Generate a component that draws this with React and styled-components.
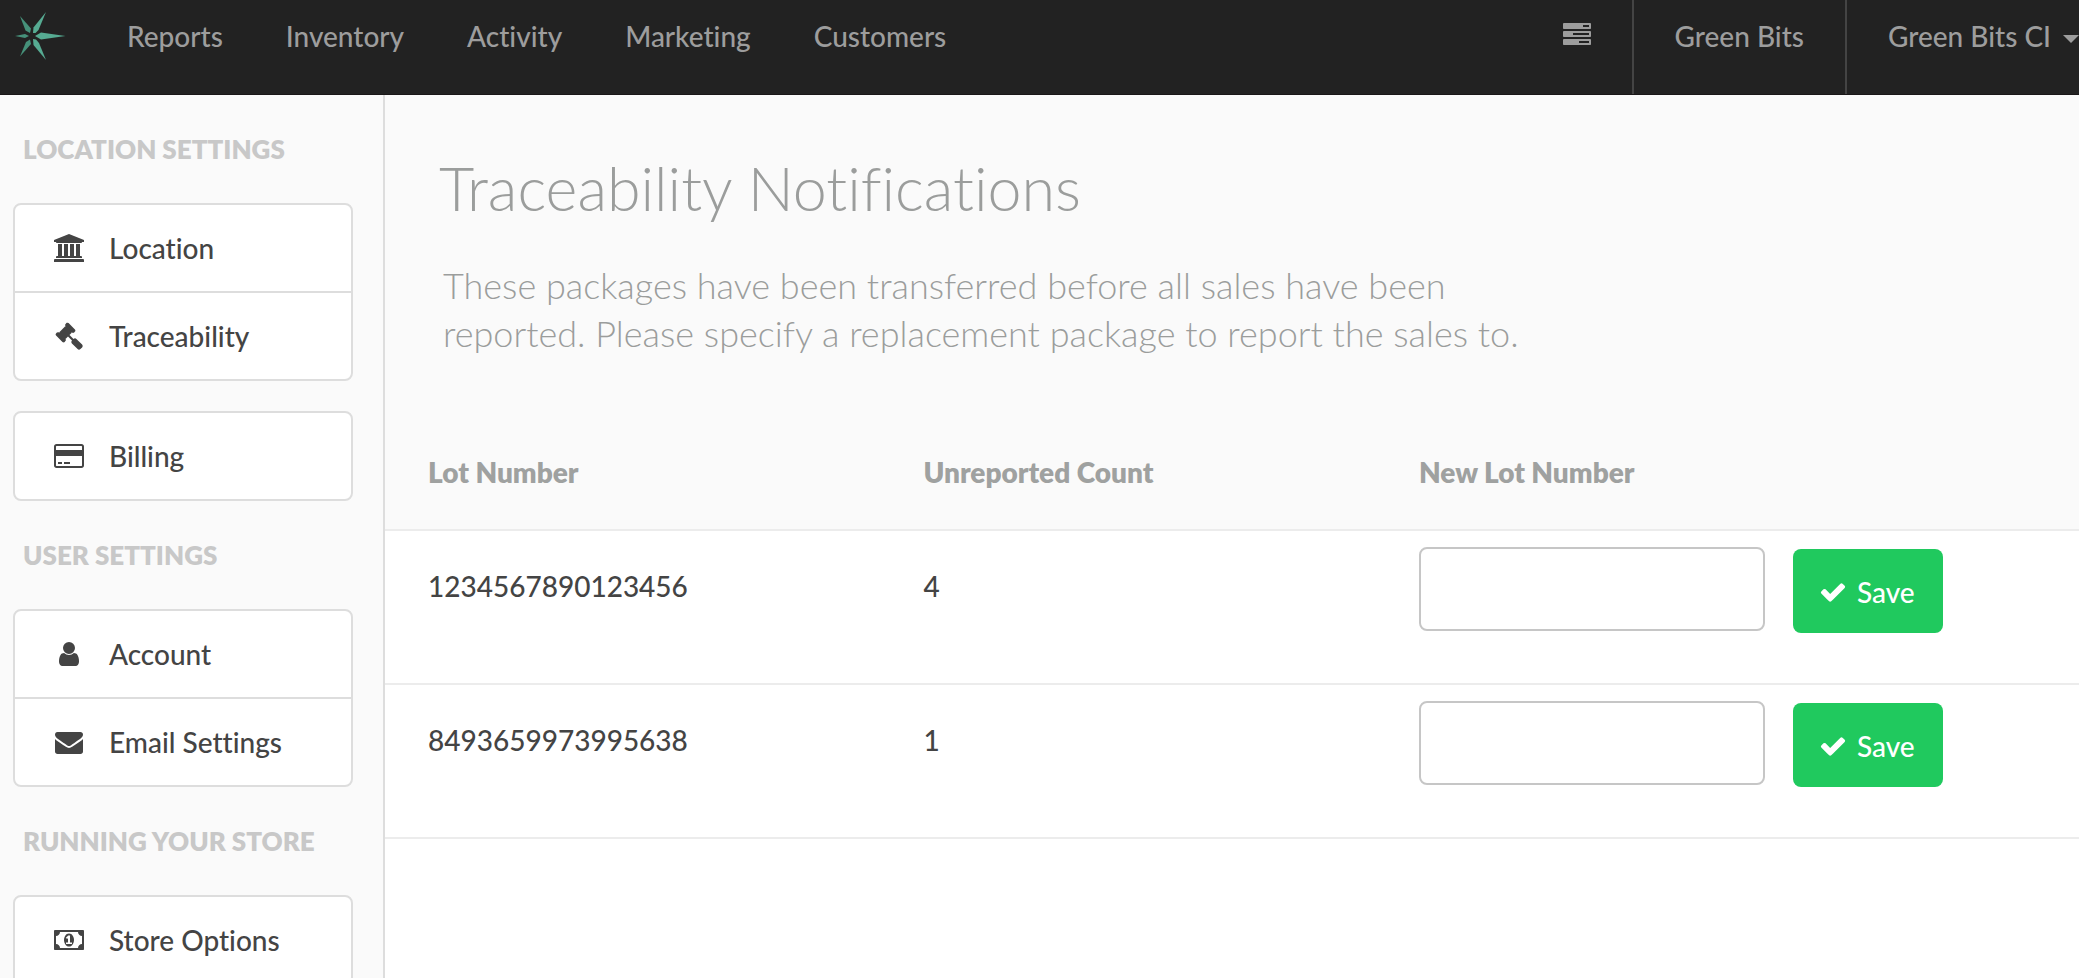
import React from "react";
import styled, { createGlobalStyle } from "styled-components";

const GlobalStyle = createGlobalStyle`
  *, *::before, *::after { box-sizing: border-box; }
  body {
    margin: 0;
    background: #fff;
    color: #444;
    font-family: Lato, "Liberation Sans", sans-serif;
    font-size: 28px;
    font-weight: 500;
    font-variant-ligatures: none;
    line-height: 34px;
    -webkit-font-smoothing: antialiased;
  }
`;

const Page = styled.div`
  display: flex;
  flex-direction: column;
  height: 100vh;
  overflow: hidden;
`;

const TopBar = styled.header`
  display: flex;
  flex: none;
  justify-content: space-between;
  height: 95px;
  padding-left: 12px;
  background: #222;
  border-bottom: 1px solid #1a1718;
  white-space: nowrap;
`;

const BarGroup = styled.nav`
  display: flex;
  gap: ${(p) => p.$gap || "0"};
`;

const Brand = styled.a`
  display: block;
  padding: 10px 0;
  margin-right: 26px;
  line-height: 0;
`;

const BarLink = styled.a`
  display: block;
  padding: 19px 30px 0;
  color: #9d9d9d;
  text-decoration: none;
`;

const BarIconLink = styled(BarLink)`
  padding: 21px 41px 0;
  line-height: 0;
`;

const AccountLink = styled(BarLink)`
  padding: 19px 41px 0;
  border-left: 2px solid #444;
`;

const AccountMenu = styled.button`
  display: flex;
  align-items: flex-start;
  gap: 12px;
  padding: 19px 0 0 41px;
  border: 0;
  border-left: 2px solid #444;
  background: none;
  color: #9d9d9d;
  font: inherit;
`;

const Caret = styled.span`
  margin-top: 16px;
  border: 8px solid transparent;
  border-top-color: currentColor;
  border-bottom: 0;
`;

const Body = styled.div`
  display: flex;
  flex: 1;
  min-height: 0;
`;

const Sidebar = styled.aside`
  flex: none;
  width: 385px;
  padding: 0 30px 0 13px;
  border-right: 2px solid #ddd;
  background: #fafafa;
  overflow: hidden;
`;

const SectionTitle = styled.h2`
  margin: 0;
  padding: 38px 10px;
  color: #c8c8c8;
  font-size: 26px;
  font-weight: 800;
  line-height: 32px;
  text-transform: uppercase;
  white-space: nowrap;
`;

const Menu = styled.ul`
  margin: 0;
  padding: 0;
  list-style: none;
  border: 2px solid #ddd;
  border-radius: 8px;
  background: #fff;

  & + & { margin-top: 30px; }
`;

const MenuItem = styled.li`
  & + & { border-top: 2px solid #ddd; }
`;

const MenuLink = styled.a`
  display: flex;
  align-items: center;
  gap: 22px;
  height: 86px;
  padding: 0 36px;
  color: #444;
  text-decoration: none;
  white-space: nowrap;
`;

const IconSlot = styled.span`
  display: flex;
  justify-content: center;
  width: 36px;
`;

const Main = styled.main`
  flex: 1;
  min-width: 0;
  overflow: hidden;
`;

const Intro = styled.section`
  padding: 57px 54px 58px;
  background: #fafafa;
  color: #9b9d9c;
`;

const Title = styled.h1`
  margin: 0 0 37px;
  font-size: 61px;
  font-weight: 300;
  line-height: 72px;
`;

const Lead = styled.p`
  max-width: 1100px;
  margin: 0;
  padding-left: 4px;
  font-size: 36px;
  font-weight: 300;
  line-height: 48px;
`;

const Table = styled.table`
  width: 100%;
  border-collapse: separate;
  border-spacing: 0;
  table-layout: fixed;
`;

const HeadCell = styled.th`
  width: ${(p) => p.$width || "auto"};
  padding: 40px 0 40px 43px;
  border-bottom: 2px solid #ececec;
  background: #fafafa;
  color: #9fa1a0;
  font-weight: 800;
  text-align: left;
`;

const Cell = styled.td`
  height: 154px;
  padding: ${(p) => (p.$form ? "16px" : "38px")} 0 0 43px;
  border-bottom: 2px solid #ececec;
  vertical-align: top;
`;

const LotForm = styled.form`
  display: flex;
  align-items: flex-start;
  gap: 28px;
`;

const LotInput = styled.input`
  width: 346px;
  height: 84px;
  padding: 0 24px;
  border: 2px solid #c6c6c6;
  border-radius: 8px;
  background: #fff;
  color: #444;
  font: inherit;
`;

const SaveButton = styled.button`
  display: flex;
  align-items: center;
  gap: 10px;
  height: 84px;
  margin-top: 2px;
  padding: 2px 28px 0 26px;
  border: 0;
  border-radius: 8px;
  background: #20c95e;
  color: #fff;
  font: inherit;
`;

const ICONS = {
  tasks: [1792, "M1024 1408h640v-128h-640v128zm-384-512h1024v-128h-1024v128zm640-512h384v-128h-384v128zm512 832v256q0 26-19 45t-45 19h-1664q-26 0-45-19t-19-45v-256q0-26 19-45t45-19h1664q26 0 45 19t19 45zm0-512v256q0 26-19 45t-45 19h-1664q-26 0-45-19t-19-45v-256q0-26 19-45t45-19h1664q26 0 45 19t19 45zm0-512v256q0 26-19 45t-45 19h-1664q-26 0-45-19t-19-45v-256q0-26 19-45t45-19h1664q26 0 45 19t19 45z"],
  bank: [1920, "M960 0l960 384v128h-128q0 26-20.5 45t-48.5 19h-1526q-28 0-48.5-19t-20.5-45h-128v-128zm-704 640h256v768h128v-768h256v768h128v-768h256v768h128v-768h256v768h59q28 0 48.5 19t20.5 45v64h-1664v-64q0-26 20.5-45t48.5-19h59v-768zm1595 960q28 0 48.5 19t20.5 45v128h-1920v-128q0-26 20.5-45t48.5-19h1782z"],
  gavel: [1792, "M1771 1536q0 53-37 90l-107 108q-39 37-91 37-53 0-90-37l-363-364q-38-36-38-90 0-53 43-96l-256-256-126 126q-14 14-34 14t-34-14q2 2 12.5 12t12.5 13 10 11.5 10 13.5 6 13.5 5.5 16.5 1.5 18q0 38-28 68-3 3-16.5 18t-19 20.5-18.5 16.5-22 15.5-22 9-26 4.5q-40 0-68-28l-408-408q-28-28-28-68 0-13 4.5-26t9-22 15.5-22 16.5-18.5 20.5-19 18-16.5q30-28 68-28 10 0 18 1.5t16.5 5.5 13.5 6 13.5 10 11.5 10 13 12.5 12 12.5q-14-14-14-34t14-34l348-348q14-14 34-14t34 14q-2-2-12.5-12t-12.5-13-10-11.5-10-13.5-6-13.5-5.5-16.5-1.5-18q0-38 28-68 3-3 16.5-18t19-20.5 18.5-16.5 22-15.5 22-9 26-4.5q40 0 68 28l408 408q28 28 28 68 0 13-4.5 26t-9 22-15.5 22-16.5 18.5-20.5 19-18 16.5q-30 28-68 28-10 0-18-1.5t-16.5-5.5-13.5-6-13.5-10-11.5-10-13-12.5-12-12.5q14 14 14 34t-14 34l-126 126 256 256q43-43 96-43 52 0 91 37l363 363q37 39 37 91z"],
  card: [1920, "M1760 128q66 0 113 47t47 113v1216q0 66-47 113t-113 47h-1600q-66 0-113-47t-47-113v-1216q0-66 47-113t113-47h1600zm-1600 128q-13 0-22.5 9.5t-9.5 22.5v224h1664v-224q0-13-9.5-22.5t-22.5-9.5h-1600zm1600 1280q13 0 22.5-9.5t9.5-22.5v-608h-1664v608q0 13 9.5 22.5t22.5 9.5h1600zm-1504-128v-128h256v128h-256zm384 0v-128h384v128h-384z"],
  user: [1792, "M1536 1399q0 109-62.5 187t-150.5 78h-854q-88 0-150.5-78t-62.5-187q0-85 8.5-160.5t31.5-152 58.5-131 94-89 134.5-34.5q131 128 313 128t313-128q76 0 134.5 34.5t94 89 58.5 131 31.5 152 8.5 160.5zm-256-887q0 159-112.5 271.5t-271.5 112.5-271.5-112.5-112.5-271.5 112.5-271.5 271.5-112.5 271.5 112.5 112.5 271.5z"],
  envelope: [1792, "M1792 710v794q0 66-47 113t-113 47h-1472q-66 0-113-47t-47-113v-794q44 49 101 87 362 246 497 345 57 42 92.5 65.5t94.5 48 110 24.5h2q51 0 110-24.5t94.5-48 92.5-65.5q170-123 498-345 57-39 100-87zm0-294q0 79-49 151t-122 123q-376 261-468 325-10 7-42.5 31t-54 38.5-52 32.5-57.5 27-50 9h-2q-23 0-50-9t-57.5-27-52-32.5-54-38.5-42.5-31q-91-64-262-182.5t-205-142.5q-62-42-117-115.5t-55-136.5q0-78 41.5-130t118.5-52h1472q65 0 112.5 47t47.5 113z"],
  money: [1920, "M768 1152h384v-96h-128v-448h-114l-148 137 77 80q42-37 55-57h2v288h-128v96zm512-256q0 70-21 142t-59.5 134-101.5 101-138 39-138-39-101.5-101-59.5-134-21-142 21-142 59.5-134 101.5-101 138-39 138 39 101.5 101 59.5 134 21 142zm512 256v-512q-106 0-181-75t-75-181h-1152q0 106-75 181t-181 75v512q106 0 181 75t75 181h1152q0-106 75-181t181-75zm128-832v1152q0 26-19 45t-45 19h-1792q-26 0-45-19t-19-45v-1152q0-26 19-45t45-19h1792q26 0 45 19t19 45z"],
  check: [1792, "M1671 566q0 40-28 68l-724 724-136 136q-28 28-68 28t-68-28l-136-136-362-362q-28-28-28-68t28-68l136-136q28-28 68-28t68 28l294 295 656-657q28-28 68-28t68 28l136 136q28 28 28 68z"],
};

function Icon({ name }) {
  const [width, path] = ICONS[name];
  return (
    <svg width={width / 64} height="28" viewBox={`0 0 ${width} 1792`} fill="currentColor" aria-hidden="true">
      <path d={path} />
    </svg>
  );
}

function Logo() {
  return (
    <svg width="56" height="52" viewBox="0 0 56 52" aria-hidden="true">
      <path fill="#56ab92" d="M23 26L29 22.500L53.500 26L29 29.500Z" />
      <path fill="#56ab92" d="M21 23L21.500 17.500L34 2L26.500 20L23.500 23Z" />
      <path fill="#56ab92" d="M21 29L24 29.500L27 33L34 50L21.500 35Z" />
      <path fill="#46917a" d="M18 23L13.500 20.500L8 6L19 18.500Z" />
      <path fill="#46917a" d="M18 29.500L14 32L8 46.500L19 34Z" />
      <path fill="#46917a" d="M17 26L13 24L3 26L13 28Z" />
    </svg>
  );
}

const NAV = ["Reports", "Inventory", "Activity", "Marketing", "Customers"];

const SECTIONS = [
  {
    title: "Location Settings",
    menus: [
      [["bank", "Location"], ["gavel", "Traceability"]],
      [["card", "Billing"]],
    ],
  },
  { title: "User Settings", menus: [[["user", "Account"], ["envelope", "Email Settings"]]] },
  { title: "Running Your Store", menus: [[["money", "Store Options"]]] },
];

const LOTS = [
  { lot: "1234567890123456", count: 4 },
  { lot: "8493659973995638", count: 1 },
];

export default function App() {
  return (
    <Page>
      <GlobalStyle />
      <TopBar>
        <BarGroup aria-label="Main" $gap="3px">
          <Brand href="#" aria-label="Home"><Logo /></Brand>
          {NAV.map((label) => <BarLink href="#" key={label}>{label}</BarLink>)}
        </BarGroup>
        <BarGroup aria-label="Account">
          <BarIconLink href="#" aria-label="Tasks"><Icon name="tasks" /></BarIconLink>
          <AccountLink href="#">Green Bits</AccountLink>
          <AccountMenu type="button">Green Bits CI<Caret /></AccountMenu>
        </BarGroup>
      </TopBar>
      <Body>
        <Sidebar>
          {SECTIONS.map((section) => (
            <section key={section.title}>
              <SectionTitle>{section.title}</SectionTitle>
              {section.menus.map((items) => (
                <Menu key={items[0][1]}>
                  {items.map(([icon, label]) => (
                    <MenuItem key={label}>
                      <MenuLink href="#"><IconSlot><Icon name={icon} /></IconSlot>{label}</MenuLink>
                    </MenuItem>
                  ))}
                </Menu>
              ))}
            </section>
          ))}
        </Sidebar>
        <Main>
          <Intro>
            <Title>Traceability Notifications</Title>
            <Lead>
              These packages have been transferred before all sales have been reported. Please
              specify a replacement package to report the sales to.
            </Lead>
          </Intro>
          <Table>
            <thead>
              <tr>
                <HeadCell $width="29.25%">Lot Number</HeadCell>
                <HeadCell $width="29.25%">Unreported Count</HeadCell>
                <HeadCell>New Lot Number</HeadCell>
              </tr>
            </thead>
            <tbody>
              {LOTS.map(({ lot, count }) => (
                <tr key={lot}>
                  <Cell>{lot}</Cell>
                  <Cell>{count}</Cell>
                  <Cell $form>
                    <LotForm onSubmit={(e) => e.preventDefault()}>
                      <LotInput type="text" aria-label={`New lot number for ${lot}`} />
                      <SaveButton type="submit"><Icon name="check" />Save</SaveButton>
                    </LotForm>
                  </Cell>
                </tr>
              ))}
            </tbody>
          </Table>
        </Main>
      </Body>
    </Page>
  );
}
